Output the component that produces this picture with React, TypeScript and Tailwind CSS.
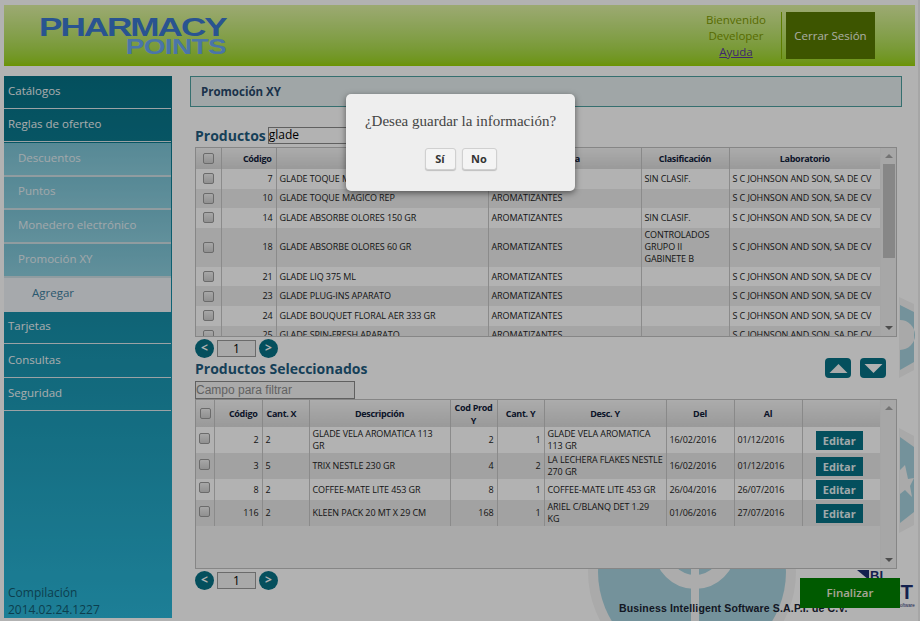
import { ReactNode } from 'react'

const font = { fontFamily: '"Open Sans", "Noto Sans", sans-serif' }

const productos = [
  { id: 7, name: 'GLADE TOQUE MAGICO APARATO', cls: 'SIN CLASIF.' },
  { id: 10, name: 'GLADE TOQUE MAGICO REP', cls: '' },
  { id: 14, name: 'GLADE ABSORBE OLORES 150 GR', cls: 'SIN CLASIF.' },
  { id: 18, name: 'GLADE ABSORBE OLORES 60 GR', cls: 'CONTROLADOS GRUPO II GABINETE B' },
  { id: 21, name: 'GLADE LIQ 375 ML', cls: '' },
  { id: 23, name: 'GLADE PLUG-INS APARATO', cls: '' },
  { id: 24, name: 'GLADE BOUQUET FLORAL AER 333 GR', cls: '' },
  { id: 25, name: 'GLADE SPIN-FRESH APARATO', cls: '' },
]

const seleccionados = [
  { cod: 2, x: 2, name: 'GLADE VELA AROMATICA 113 GR', y: 2, cy: 1, descY: 'GLADE VELA AROMATICA\n113 GR', del: '16/02/2016', al: '01/12/2016', h: 'h-[26px]' },
  { cod: 3, x: 5, name: 'TRIX NESTLE 230 GR', y: 4, cy: 2, descY: 'LA LECHERA FLAKES NESTLE\n270 GR', del: '16/02/2016', al: '01/12/2016', h: 'h-[26px]' },
  { cod: 8, x: 2, name: 'COFFEE-MATE LITE 453 GR', y: 8, cy: 1, descY: 'COFFEE-MATE LITE 453 GR', del: '26/04/2016', al: '26/07/2016', h: 'h-[21px]' },
  { cod: 116, x: 2, name: 'KLEEN PACK 20 MT X 29 CM', y: 168, cy: 1, descY: 'ARIEL C/BLANQ DET 1.29\nKG', del: '01/06/2016', al: '27/07/2016', h: 'h-[26px]' },
]

function MenuItem({ label, kind }: { label: string; kind: 'top' | 'sub' | 'active' }) {
  if (kind === 'active') {
    return <div className="flex h-[34px] items-center bg-[#eef2f6] pb-[3px] pl-7 text-[11.5px] text-[#3c80a0]">{label}</div>
  }
  if (kind === 'sub') {
    return (
      <div className="flex h-[33.6px] items-center border-b-2 border-[#cfe0e6] bg-linear-to-b from-[#7cc4d6] to-[#8ccfdf] pb-[3px] pl-3.5 text-[11.5px] text-[#e8f0f4]">
        {label}
      </div>
    )
  }
  return (
    <div className="mb-px flex h-[32.6px] items-center border-b border-[#dfe8ec] pb-[3px] pl-1 text-[11.5px] text-[#f2f6f8]">
      {label}
    </div>
  )
}

function Check({ className = '' }: { className?: string }) {
  return <span className={`mx-auto block h-[11px] w-[11px] rounded-[2px] border border-[#9a9a9a] bg-linear-to-b from-[#f0f0f0] to-[#cfcfcf] ${className}`} />
}

function Pager() {
  return (
    <div className="flex h-[19px] items-center gap-[3px]">
      <span className="flex h-[19px] w-[19px] items-center justify-center rounded-full bg-[#077286] pb-px text-[12px] font-bold text-white">&lt;</span>
      <span className="flex h-[17px] w-[39px] items-center justify-center border border-[#9a9a9a] bg-[#f2f2f2] text-[12px] text-black">1</span>
      <span className="flex h-[19px] w-[19px] items-center justify-center rounded-full bg-[#077286] pb-px text-[12px] font-bold text-white">&gt;</span>
    </div>
  )
}

function Scrollbar({ thumb }: { thumb: boolean }) {
  return (
    <div className="flex w-4 shrink-0 flex-col items-center border-l border-[#ececec] bg-[#f0f0f0]">
      <svg viewBox="0 0 8 4" className="mt-1.5 h-1 w-2 fill-[#a6a6a6]"><path d="M4 0 8 4H0z" /></svg>
      {thumb ? <div className="mt-1.5 h-[94px] w-3 bg-[#c2c2c2]" /> : null}
      <svg viewBox="0 0 8 4" className="mt-auto mb-1.5 h-1 w-2 fill-[#6f6f6f]"><path d="M0 0H8L4 4z" /></svg>
    </div>
  )
}

function Th({ children, className = '' }: { children?: ReactNode; className?: string }) {
  return <th className={`border-r border-[#c4c4c4] bg-linear-to-b from-[#f6f6f6] to-[#dcdcdc] px-1 text-center text-[9px] leading-[13px] font-bold tracking-[-0.3px] text-[#10203a] ${className}`}>{children}</th>
}

function Td({ children, className = '' }: { children?: ReactNode; className?: string }) {
  return <td className={`border-r border-[#c8c8c8] px-[3px] text-[9px] leading-[12px] tracking-[-0.1px] text-[#222] ${className}`}>{children}</td>
}

export default function App() {
  return (
    <div className="relative h-[621px] w-[920px] overflow-hidden bg-white" style={font}>
      {/* marca de agua */}
      <svg viewBox="0 0 920 621" className="absolute inset-0 h-[621px] w-[920px]">
        <circle cx="692" cy="572" r="104" fill="#f4f4f4" />
        <circle cx="692" cy="572" r="94" fill="#a6d2de" />
        <path d="M661 548a34 34 0 0 0 68 0" fill="none" stroke="#f7f7f7" strokeWidth="14" />
        <path d="M695 560V621" stroke="#f7f7f7" strokeWidth="8" />
        <path d="M899 297 914 304V370L899 378zM899 428 914 436V525L899 533z" fill="#f2f2f2" />
        <path d="M900 305 914 312V362L900 370V350A15 15 0 0 0 900 320z" fill="#a6d2de" />
        <path d="M900 437 914 447V512L900 523z" fill="#a6d2de" />
        <path d="M905 465 908 479 914 478 910 486 912 497 905 490 900 494V470z" fill="#f4f4f4" />
        <rect x="918" y="0" width="2" height="621" fill="#eeeeee" />
      </svg>

      <div className="absolute top-[570px] left-[857px] w-[56px] text-[#1c2f70]" style={{ fontFamily: '"Liberation Sans", sans-serif' }}>
        <div className="flex items-start">
          <svg viewBox="0 0 12 10" className="h-[10px] w-[12px] fill-[#1c2f70]"><path d="M0 0H12V10z" /></svg>
          <span className="ml-px text-[13px] leading-[12px] font-bold">BI</span>
        </div>
        <div className="text-right text-[20px] leading-[20px] font-bold">SOFT</div>
        <div className="mt-[1px] text-[4.5px] leading-[6px] whitespace-nowrap">Business Intelligent Software</div>
      </div>

      <div className="relative flex h-full flex-col pt-[5px] pl-1">
        <header className="flex h-[61px] w-[911px] shrink-0 items-center bg-linear-to-b from-[#e0f3a4] to-[#9ad400]">
          <div className="ml-[35px] flex w-[187px] flex-col font-bold" style={{ fontFamily: '"Liberation Sans", sans-serif' }}>
            <span className="block origin-left scale-x-[1.35] text-[26px] leading-[21px] tracking-[-1.5px] text-[#3c79ce]">PHARMACY</span>
            <span className="block origin-right scale-x-[1.27] self-end text-[22px] leading-[17px] tracking-[-0.5px] text-[#6aa8f2]">POINTS</span>
          </div>
          <div className="ml-auto flex items-center">
            <div className="mr-[15px] flex flex-col items-center text-[11.5px] leading-[16px] text-[#7e9a00]">
              <span>Bienvenido</span>
              <span>Developer</span>
              <span className="text-[#5a3a9e] underline">Ayuda</span>
            </div>
            <div className="mr-1 h-[47px] w-px bg-[#86b300]" />
            <div className="mr-10 flex h-[47px] w-[89px] items-center justify-center bg-[#587a00] text-[11.5px] font-medium text-[#f4f8e8]">Cerrar Sesión</div>
          </div>
        </header>

        <div className="flex min-h-0 flex-1 pt-[10px]">
          <aside className="flex h-[542px] w-[168px] shrink-0 flex-col bg-linear-to-b from-[#067286] to-[#2ab6d8] pr-px">
            <MenuItem label="Catálogos" kind="top" />
            <MenuItem label="Reglas de oferteo" kind="top" />
            <MenuItem label="Descuentos" kind="sub" />
            <MenuItem label="Puntos" kind="sub" />
            <MenuItem label="Monedero electrónico" kind="sub" />
            <MenuItem label="Promoción XY" kind="sub" />
            <MenuItem label="Agregar" kind="active" />
            <MenuItem label="Tarjetas" kind="top" />
            <MenuItem label="Consultas" kind="top" />
            <MenuItem label="Seguridad" kind="top" />
            <div className="mt-auto pl-1 text-[12px] leading-[17px] text-[#125a70]">
              <div>Compilación</div>
              <div>2014.02.24.1227</div>
            </div>
          </aside>

          <main className="ml-[23px] flex w-[702px] flex-col">
            <div className="flex h-[31px] w-[712px] -translate-x-[5px] items-center border border-[#4d9fa0] bg-[#e5eef0] pl-[10px] text-[11.5px] font-bold text-[#28486a]">
              Promoción XY
            </div>

            <div className="mt-[18px] flex h-[22px] items-center pb-[2px] text-[14px] font-bold text-[#1f5c7f]">
              Productos
              <span className="ml-[2px] flex h-[17px] w-[120px] items-center border border-[#8a8a8a] bg-white text-[12px] font-normal text-black">glade</span>
            </div>

            <div className="flex h-[190px] overflow-hidden border border-[#c0c0c0] bg-white">
              <div className="min-w-0 flex-1 overflow-hidden">
                <table className="w-[684px] table-fixed border-collapse">
                  <colgroup>
                    <col className="w-[25px]" /><col className="w-[55px]" /><col className="w-[212px]" /><col className="w-[153px]" /><col className="w-[88px]" /><col />
                  </colgroup>
                  <thead>
                    <tr className="h-[21px]">
                      <Th><Check /></Th><Th className="text-right">Código</Th><Th>Descripción</Th><Th>Familia</Th><Th>Clasificación</Th><Th className="border-r-0">Laboratorio</Th>
                    </tr>
                  </thead>
                  <tbody>
                    {productos.map((p, i) => (
                      <tr key={p.id} className={`${p.id === 18 ? 'h-[39px]' : 'h-[19.6px]'} ${i % 2 ? 'bg-[#ececec]' : 'bg-white'}`}>
                        <Td><Check /></Td>
                        <Td className="text-right">{p.id}</Td>
                        <Td>{p.name}</Td>
                        <Td>AROMATIZANTES</Td>
                        <Td>{p.cls}</Td>
                        <Td className="border-r-0 whitespace-nowrap">S C JOHNSON AND SON, SA DE CV</Td>
                      </tr>
                    ))}
                  </tbody>
                </table>
              </div>
              <Scrollbar thumb />
            </div>

            <div className="mt-[2px]"><Pager /></div>

            <div className="mt-[1px] flex items-start justify-between pr-[11px]">
              <div className="text-[14px] leading-[20px] font-bold text-[#1f5c7f]">Productos Seleccionados</div>
              <div className="-mt-px flex gap-[9px]">
                <span className="flex h-[20px] w-[26px] items-center justify-center rounded-[4px] bg-[#077286]">
                  <svg viewBox="0 0 20 10" className="h-[9px] w-[19px] fill-[#f4f4f4]"><path d="M10 0 20 10H0z" /></svg>
                </span>
                <span className="flex h-[20px] w-[26px] items-center justify-center rounded-[4px] bg-[#077286]">
                  <svg viewBox="0 0 20 10" className="h-[9px] w-[19px] fill-white"><path d="M0 0H20L10 10z" /></svg>
                </span>
              </div>
            </div>

            <div className="mt-[2px] flex h-[18px] w-[160px] items-center border border-[#8a8a8a] bg-[#f4f4f4] text-[12px] text-[#8c8c8c]" style={{ fontFamily: '"Liberation Sans", sans-serif' }}>
              Campo para filtrar
            </div>

            <div className="flex h-[170px] overflow-hidden border border-[#c0c0c0] bg-[#f4f4f4]">
              <div className="min-w-0 flex-1 overflow-hidden">
                <table className="w-[684px] table-fixed border-collapse">
                  <colgroup>
                    <col className="w-[18px]" /><col className="w-[48px]" /><col className="w-[47px]" /><col className="w-[141px]" /><col className="w-[47px]" /><col className="w-[47px]" /><col className="w-[122px]" /><col className="w-[68px]" /><col className="w-[68px]" /><col />
                  </colgroup>
                  <thead>
                    <tr className="h-[27px]">
                      <Th><Check /></Th><Th className="text-right">Código</Th><Th className="text-left">Cant. X</Th><Th>Descripción</Th><Th>Cod Prod Y</Th><Th>Cant. Y</Th><Th>Desc. Y</Th><Th>Del</Th><Th>Al</Th><Th className="border-r-0" />
                    </tr>
                  </thead>
                  <tbody>
                    {seleccionados.map((s, i) => (
                      <tr key={s.cod} className={`${s.h} ${i % 2 ? 'bg-[#e8e8e8]' : 'bg-white'}`}>
                        <Td><Check className="-translate-y-[2px]" /></Td>
                        <Td className="text-right">{s.cod}</Td>
                        <Td>{s.x}</Td>
                        <Td>{s.name}</Td>
                        <Td className="text-right">{s.y}</Td>
                        <Td className="text-right">{s.cy}</Td>
                        <Td className="pr-0 whitespace-pre-line">{s.descY}</Td>
                        <Td className="whitespace-nowrap">{s.del}</Td>
                        <Td className="whitespace-nowrap">{s.al}</Td>
                        <td className="p-0 pr-1">
                          <span className="mx-auto block h-[19px] w-[47px] bg-[#077286] text-center text-[11px] leading-[19px] font-bold text-[#e6f2f4]">Editar</span>
                        </td>
                      </tr>
                    ))}
                  </tbody>
                </table>
              </div>
              <Scrollbar thumb={false} />
            </div>

            <div className="mt-[2px] flex items-start">
              <Pager />
              <div className="relative mt-[7px] ml-auto flex h-[30px] w-[100px] translate-x-[3px] items-center justify-center bg-[#008200] text-[11.5px] font-semibold text-[#f0ecd8]">Finalizar</div>
            </div>
            <div className="-mt-[6px] ml-[424px] whitespace-nowrap text-[10.5px] leading-[12px] font-bold tracking-[0.15px] text-[#1b2333]" style={{ fontFamily: '"Liberation Sans", sans-serif' }}>
              Business Intelligent Software S.A.P.I. de C.V.
            </div>
          </main>
        </div>
      </div>

      <div className="absolute inset-0 bg-black/30" />

      <div className="absolute top-[94px] left-[346px] flex h-[97px] w-[229px] flex-col items-center rounded-[5px] bg-[#eeeeee] pt-[17px] shadow-[0_2px_6px_rgba(0,0,0,0.5)]">
        <div className="text-[15px] leading-[20px] text-[#444]" style={{ fontFamily: '"Liberation Serif", serif' }}>¿Desea guardar la información?</div>
        <div className="mt-[17px] flex gap-[6px]">
          <span className="flex h-[22px] w-[31px] items-center justify-center rounded-[3px] border border-[#d0d0d0] bg-[#f4f4f4] text-[11px] font-bold text-[#333] shadow-[0_1px_1px_rgba(0,0,0,0.2)]">Sí</span>
          <span className="flex h-[22px] w-[35px] items-center justify-center rounded-[3px] border border-[#d0d0d0] bg-[#f4f4f4] text-[11px] font-bold text-[#333] shadow-[0_1px_1px_rgba(0,0,0,0.2)]">No</span>
        </div>
      </div>
    </div>
  )
}
